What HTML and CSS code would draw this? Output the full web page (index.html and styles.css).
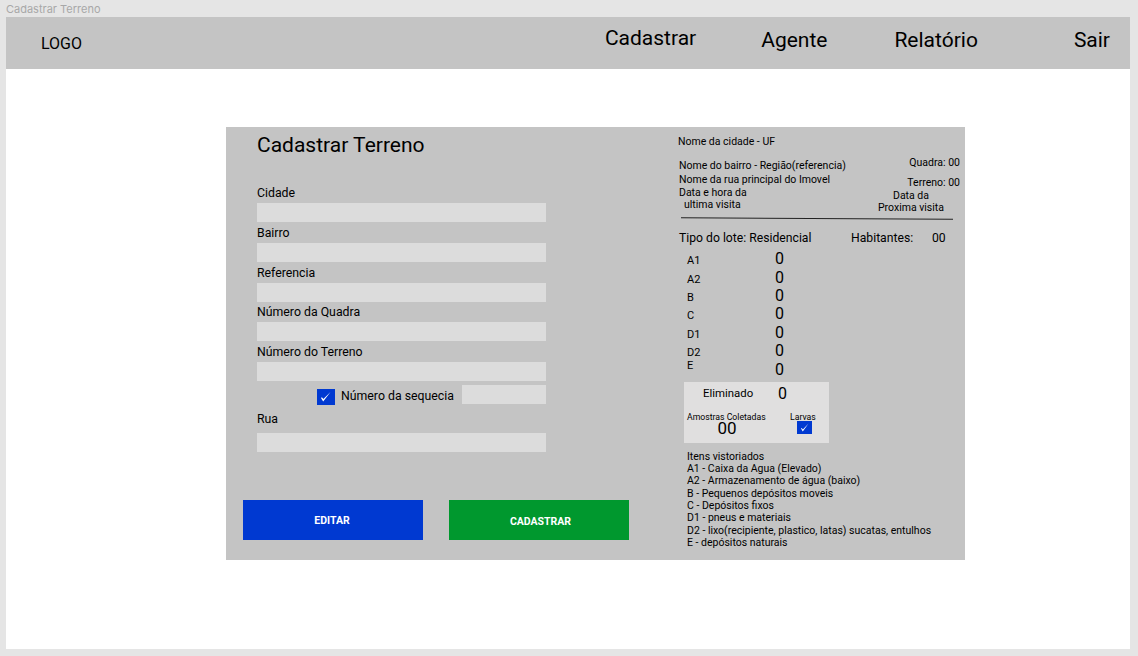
FILE: index.html
```html
<!DOCTYPE html>
<html lang="en">
<head>
  <meta charset="UTF-8" />
  <meta name="viewport" content="width=device-width, initial-scale=1" />
  <title>Cadastrar Terreno</title>
  <link rel="stylesheet" href="styles.css">
</head>
<body>
  <div class="frame-title">Cadastrar Terreno</div>
  <div class="frame">
    <header class="topbar">
      <div class="logo">LOGO</div>
      <nav class="nav">
        <a class="nav-item nav-cadastrar">Cadastrar</a>
        <a class="nav-item nav-agente">Agente</a>
        <a class="nav-item nav-relatorio">Relatório</a>
        <a class="nav-item nav-sair">Sair</a>
      </nav>
    </header>

    <main class="card">
      <section class="form-side">
        <h1 class="form-title">Cadastrar Terreno</h1>
        <div class="fields">
          <label class="field-label">Cidade</label>
          <div class="input"></div>
          <label class="field-label">Bairro</label>
          <div class="input"></div>
          <label class="field-label">Referencia</label>
          <div class="input"></div>
          <label class="field-label">Número da Quadra</label>
          <div class="input"></div>
          <label class="field-label">Número do Terreno</label>
          <div class="input"></div>
          <div class="seq-row">
            <span class="check check-lg">
              <svg viewBox="0 0 18 16"><path d="M4 9 L6.2 12.6 L13.5 3 L6.4 10 L4.9 8.2 Z" /></svg>
            </span>
            <span class="seq-label">Número da sequecia</span>
            <div class="input input-seq"></div>
          </div>
          <label class="field-label label-rua">Rua</label>
          <div class="input"></div>
        </div>
        <div class="actions">
          <button class="btn btn-blue">EDITAR</button>
          <button class="btn btn-green">CADASTRAR</button>
        </div>
      </section>

      <aside class="summary">
        <div class="city">Nome da cidade - UF</div>
        <div class="meta">
          <div class="meta-left">
            <div class="meta-bairro">Nome do bairro - Região(referencia)</div>
            <div class="meta-rua">Nome da rua principal do Imovel</div>
            <div class="meta-data">Data e hora da</div>
            <div class="meta-visita">ultima visita</div>
          </div>
          <div class="meta-right">
            <div class="meta-quadra">Quadra: 00</div>
            <div class="meta-terreno">Terreno: 00</div>
            <div class="meta-next">Data da<br>Proxima visita</div>
          </div>
        </div>
        <div class="rule"></div>
        <div class="type-row">
          <span class="type">Tipo do lote: Residencial</span>
          <span class="hab">Habitantes:</span>
          <span class="hab-value">00</span>
        </div>
        <div class="counts">
          <div class="count-row"><span class="count-key">A1</span><span class="count-value">0</span></div>
          <div class="count-row"><span class="count-key">A2</span><span class="count-value">0</span></div>
          <div class="count-row"><span class="count-key">B</span><span class="count-value">0</span></div>
          <div class="count-row"><span class="count-key">C</span><span class="count-value">0</span></div>
          <div class="count-row"><span class="count-key">D1</span><span class="count-value">0</span></div>
          <div class="count-row"><span class="count-key">D2</span><span class="count-value">0</span></div>
          <div class="count-row count-row-e"><span class="count-key">E</span><span class="count-value">0</span></div>
        </div>
        <div class="result-box">
          <div class="result-top">
            <span class="result-label">Eliminado</span>
            <span class="result-value">0</span>
          </div>
          <div class="result-bottom">
            <div class="sample">
              <div class="mini-label">Amostras Coletadas</div>
              <div class="sample-value">00</div>
            </div>
            <div class="larvae">
              <div class="mini-label">Larvas</div>
              <span class="check check-sm">
                <svg viewBox="0 0 15 13"><path d="M4 7.5 L5.8 10.6 L11.5 2.5 L5.9 8.6 L4.7 7 Z" /></svg>
              </span>
            </div>
          </div>
        </div>
        <ul class="legend">
          <li>Itens vistoriados</li>
          <li>A1 - Caixa da Agua (Elevado)</li>
          <li>A2 - Armazenamento de água (baixo)</li>
          <li>B - Pequenos depósitos moveis</li>
          <li>C - Depósitos fixos</li>
          <li>D1 - pneus e materiais</li>
          <li>D2 - lixo(recipiente, plastico, latas) sucatas, entulhos</li>
          <li>E - depósitos naturais</li>
        </ul>
      </aside>
    </main>
  </div>
</body>
</html>
```

FILE: styles.css
```css
html, body {
  margin: 0;
  padding: 0;
  height: 100%;
  overflow: hidden;
  background-color: #e5e5e5;
  font-family: Roboto, 'Liberation Sans', sans-serif;
  color: #000;
}

.frame-title {
  height: 17px;
  padding-left: 6px;
  font-family: Inter, Roboto, sans-serif;
  font-size: 11px;
  line-height: 18px;
  color: #a8a8a8;
}

.frame {
  width: 1124px;
  height: 632px;
  margin-left: 6px;
  background: #fff;
}

/* top bar */
.topbar {
  height: 52px;
  background: #c4c4c4;
  display: flex;
  justify-content: space-between;
}

.logo {
  margin: 18px 0 0 35px;
  font-size: 16px;
  line-height: 18px;
}

.nav {
  display: flex;
  font-size: 21px;
  line-height: 24px;
}

.nav-item { display: block; }
.nav-cadastrar { margin: 9px 65px 0 0; }
.nav-agente { margin: 11px 67px 0 0; }
.nav-relatorio { margin: 11px 96px 0 0; }
.nav-sair { margin: 11px 20px 0 0; }

/* main card */
.card {
  width: 739px;
  height: 433px;
  margin: 58px 0 0 220px;
  background: #c4c4c4;
  display: flex;
}

.form-side {
  width: 452px;
  flex: none;
}

.form-title {
  margin: 5px 0 0 31px;
  font-size: 21px;
  font-weight: 400;
  line-height: 26px;
}

.fields {
  margin: 26px 0 0 31px;
  width: 289px;
}

.field-label {
  display: block;
  height: 19px;
  font-size: 12.3px;
  line-height: 18px;
}

.input {
  height: 19px;
  margin-bottom: 1.75px;
  background: #dcdcdc;
}

.seq-row {
  height: 20px;
  margin-top: 4px;
  display: flex;
  align-items: flex-start;
}

.check {
  display: block;
  background: #0039d1;
}

.check svg {
  display: block;
  width: 100%;
  height: 100%;
  fill: #fff;
}

.check-lg {
  width: 18px;
  height: 16px;
  margin: 4px 0 0 60px;
}

.seq-label {
  margin: 3px 0 0 6px;
  font-size: 12.3px;
  line-height: 16px;
  white-space: nowrap;
}

.input-seq {
  width: 84px;
  margin-left: auto;
}

.label-rua {
  height: 28px;
  padding-top: 5px;
  box-sizing: border-box;
}

.actions {
  margin: 48px 0 0 17px;
  display: flex;
  gap: 26px;
}

.btn {
  width: 180px;
  height: 40px;
  padding: 0;
  border: 0;
  color: #fff;
  font-family: inherit;
  font-size: 10.5px;
  font-weight: 700;
}

.btn-blue { background: #0039d1; padding-right: 2px; }
.btn-green { background: #00982e; padding: 2px 0 0 3px; }

/* right column */
.summary {
  flex: 1;
  min-width: 0;
  font-size: 10.5px;
  line-height: 12px;
}

.city { margin: 9px 0 0 0; }

.meta {
  display: flex;
  justify-content: space-between;
  height: 58px;
  margin-top: 12px;
}

.meta-left { margin-left: 1px; }
.meta-rua { margin-top: 2px; }
.meta-data { margin-top: 1px; }
.meta-visita { margin: 0 0 0 5px; }

.meta-right {
  width: 90px;
  margin-right: 5px;
  margin-top: -3px;
  text-align: right;
}

.meta-terreno { margin-top: 8px; }

.meta-next {
  margin: 1px 3px 0 -5px;
  text-align: center;
}

.rule {
  height: 1px;
  margin: 0 12px 0 3px;
  background: #222;
  transform: rotate(0.3deg);
}

.type-row {
  display: flex;
  align-items: center;
  height: 18px;
  margin-top: 10px;
  font-size: 12.2px;
}

.type {
  width: 172px;
  margin-left: 1px;
}

.hab { width: 81px; }

.counts { margin-top: 3px; }

.count-row {
  display: flex;
  align-items: center;
  height: 18.4px;
  margin-left: 9px;
}

.count-key {
  width: 88px;
  font-size: 11px;
  padding-top: 4px;
}

.count-value {
  font-size: 16px;
  line-height: 18px;
}

.count-row-e .count-key {
  padding: 0 0 8px;
}

.result-box {
  width: 145px;
  height: 61px;
  margin: 3px 0 0 6px;
  background: #e0dfdf;
}

.result-top {
  display: flex;
  align-items: center;
  padding-top: 3px;
  height: 18px;
}

.result-label {
  width: 75px;
  margin: 0 0 2px 19px;
  font-size: 11.4px;
}

.result-value {
  font-size: 16px;
  line-height: 18px;
}

.result-bottom {
  display: flex;
  margin-top: 9px;
}

.sample {
  width: 106px;
  padding-left: 3px;
}

.mini-label {
  font-size: 8.7px;
  line-height: 10px;
  white-space: nowrap;
}

.sample-value {
  width: 80px;
  text-align: center;
  font-size: 17px;
  line-height: 12px;
}

.check-sm {
  width: 15px;
  height: 13px;
  margin: -1px 0 0 7px;
}

.larvae { margin-left: -3px; }

.legend {
  list-style: none;
  margin: 8px 0 0 9px;
  padding: 0;
  line-height: 12.3px;
}
```
